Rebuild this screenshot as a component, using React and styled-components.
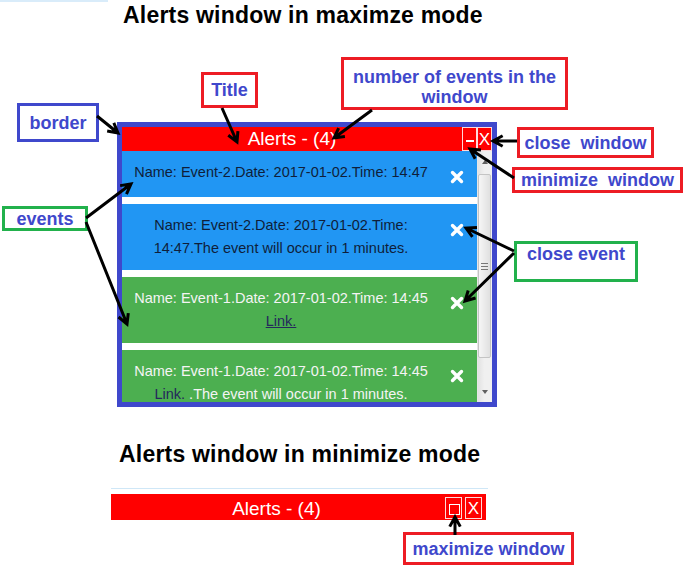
import React from "react";
import styled, { createGlobalStyle } from "styled-components";

const GlobalStyle = createGlobalStyle`
  body {
    margin: 0;
    background: #fff;
    font-family: "Liberation Sans", Arial, sans-serif;
  }
`;

const Page = styled.div`
  position: relative;
  width: 694px;
  height: 570px;
  overflow: hidden;
  background: #fff;
`;

const TopStrip = styled.div`
  width: 108px;
  height: 2px;
  background: #d9ecfa;
`;

const Heading = styled.h1`
  margin: ${(p) => p.$top}px 0 0;
  padding-left: ${(p) => p.$indent}px;
  font: bold 23px/26px "Liberation Sans", Arial, sans-serif;
  letter-spacing: 0.2px;
  color: #000;
`;

const Window = styled.div`
  margin: 94px 0 0 117px;
  width: 380px;
  height: 285px;
  box-sizing: border-box;
  border: 5px solid #3f48cc;
  display: flex;
  flex-direction: column;
  background: #fff;
`;

const TitleBar = styled.div`
  display: flex;
  align-items: flex-start;
  flex-shrink: 0;
  width: ${(p) => (p.$mini ? "375px" : "auto")};
  height: ${(p) => (p.$mini ? 26 : 24)}px;
  box-sizing: border-box;
  padding: ${(p) => (p.$mini ? "3px 4px 0 0" : "0")};
  gap: ${(p) => (p.$mini ? 3 : 0)}px;
  background: #ff0000;
`;

const Title = styled.div`
  flex: 1;
  text-align: center;
  color: #fff;
  font-size: 19px;
  line-height: 24px;
`;

const WinButton = styled.div`
  width: ${(p) => p.$w}px;
  height: ${(p) => p.$h}px;
  box-sizing: border-box;
  border: 1px solid rgba(255, 255, 255, 0.85);
  display: flex;
  align-items: center;
  justify-content: center;
  color: #fff;
  font-size: 17px;
  line-height: 1;
`;

const MinGlyph = styled.span`
  width: 8px;
  height: 1.5px;
  margin-top: 4px;
  background: #fff;
`;

const MaxGlyph = styled.span`
  width: 11px;
  height: 11px;
  margin: 3px 0 0 2px;
  box-sizing: border-box;
  border: 1.5px solid #fff;
`;

const Body = styled.div`
  display: flex;
  flex: 1;
  min-height: 0;
`;

const EventList = styled.div`
  flex: 1;
  overflow: hidden;
`;

const Event = styled.div`
  display: flex;
  align-items: flex-start;
  padding: 10px 7px 10px 10px;
  margin-bottom: 7px;
  background: ${(p) => p.$bg};
`;

const EventText = styled.div`
  flex: 1;
  margin-right: 14px;
  text-align: center;
  font-size: 14.5px;
  line-height: 23px;
  color: ${(p) => p.$fg};
`;

const EventLink = styled.a`
  color: #25285c;
  text-decoration: ${(p) => (p.$underline ? "underline" : "none")};
`;

const CloseEvent = styled.button`
  width: 26px;
  height: 26px;
  padding: 9px 0 0;
  border: 0;
  background: none;
  display: flex;
  justify-content: center;
  align-items: flex-start;
`;

const Scrollbar = styled.div`
  width: 15px;
  display: flex;
  flex-direction: column;
  box-sizing: border-box;
  border-left: 1px solid #e6e6e6;
  background: linear-gradient(to right, #e2e2e2, #f0f0f0 45%, #f0f0f0);
`;

const ScrollArrow = styled.div`
  height: 21px;
  display: flex;
  align-items: center;
  justify-content: center;
  &::after {
    content: "";
    border-left: 3.5px solid transparent;
    border-right: 3.5px solid transparent;
    ${(p) => (p.$up ? "border-bottom" : "border-top")}: 4px solid #606060;
  }
`;

const Track = styled.div`
  flex: 1;
  padding: 2px 1px 0 0;
`;

const Thumb = styled.div`
  height: 184px;
  box-sizing: border-box;
  border: 1px solid #c4c4c4;
  border-radius: 2px;
  background: linear-gradient(to right, #f6f6f6, #e0e0e0);
  display: flex;
  align-items: center;
  justify-content: center;
`;

const Grip = styled.span`
  width: 7px;
  height: 7px;
  background: repeating-linear-gradient(to bottom, #777 0 1px, transparent 1px 3px);
`;

const MiniWrap = styled.div`
  margin: 21px 0 0 111px;
  width: 377px;
  border-top: 1px solid #cfe7f7;
  padding-top: 5px;
`;

const Label = styled.div`
  position: absolute;
  left: ${(p) => p.$x}px;
  top: ${(p) => p.$y}px;
  width: ${(p) => p.$w}px;
  height: ${(p) => p.$h}px;
  box-sizing: border-box;
  border: 3px solid ${(p) => p.$color};
  padding-top: ${(p) => p.$pad || 0}px;
  background: #fff;
  display: flex;
  align-items: ${(p) => (p.$top ? "flex-start" : "center")};
  justify-content: center;
  text-align: center;
  white-space: pre-wrap;
  color: #3f48cc;
  font: bold 18px/20px "Liberation Sans", Arial, sans-serif;
`;

const Overlay = styled.svg`
  position: absolute;
  left: 0;
  top: 0;
  pointer-events: none;
`;

const RED = "#ed1c24";
const BLUE = "#3f48cc";
const GREEN = "#22b14c";

const labels = [
  { x: 201, y: 72, w: 57, h: 36, color: RED, text: "Title" },
  { x: 341, y: 57, w: 227, h: 53, color: RED, text: "number of events in the window", top: true, pad: 7 },
  { x: 17, y: 103, w: 82, h: 39, color: BLUE, text: "border" },
  { x: 2, y: 206, w: 86, h: 25, color: GREEN, text: "events" },
  { x: 517, y: 127, w: 137, h: 31, color: RED, text: "close  window" },
  { x: 512, y: 167, w: 171, h: 26, color: RED, text: "minimize  window" },
  { x: 514, y: 241, w: 124, h: 41, color: GREEN, text: "close event", top: true },
  { x: 403, y: 532, w: 171, h: 33, color: RED, text: "maximize window" },
];

const arrows = [
  [97, 116, 118, 133],
  [222, 108, 237, 142],
  [372, 110, 334, 138],
  [517, 141, 493, 141],
  [514, 178, 470, 149],
  [86, 218, 131, 184],
  [86, 222, 127, 324],
  [514, 251, 466, 228],
  [514, 253, 465, 301],
  [455, 535, 455, 517],
];

function Arrow({ x1, y1, x2, y2 }) {
  const a = Math.atan2(y2 - y1, x2 - x1);
  const len = 11;
  const s = 0.5;
  const h1 = [x2 - len * Math.cos(a - s), y2 - len * Math.sin(a - s)];
  const h2 = [x2 - len * Math.cos(a + s), y2 - len * Math.sin(a + s)];
  return (
    <path
      d={`M${x1} ${y1}L${x2} ${y2}M${h1[0]} ${h1[1]}L${x2} ${y2}L${h2[0]} ${h2[1]}`}
      stroke="#000"
      strokeWidth="3"
      fill="none"
    />
  );
}

const TimesIcon = () => (
  <svg width="14" height="14" viewBox="0 0 14 14">
    <path d="M2.5 2.5L11.5 11.5M11.5 2.5L2.5 11.5" stroke="#fff" strokeWidth="3.4" strokeLinecap="round" />
  </svg>
);

const BLUE_EVENT = "#2196f3";
const GREEN_EVENT = "#4caf50";

const events = [
  { id: 1, bg: BLUE_EVENT, fg: "#0f1e3a", text: "Name: Event-2.Date: 2017-01-02.Time: 14:47" },
  { id: 2, bg: BLUE_EVENT, fg: "#0f1e3a", text: "Name: Event-2.Date: 2017-01-02.Time: 14:47.The event will occur in 1 minutes." },
  { id: 3, bg: GREEN_EVENT, fg: "#f4f4f4", text: "Name: Event-1.Date: 2017-01-02.Time: 14:45 ", link: true, underline: true },
  { id: 4, bg: GREEN_EVENT, fg: "#f4f4f4", text: "Name: Event-1.Date: 2017-01-02.Time: 14:45 ", link: true, after: " .The event will occur in 1 minutes." },
];

const App = () => {
  return (
    <Page>
      <GlobalStyle />
      <TopStrip />
      <Heading $top={0} $indent={123}>Alerts window in maximze mode</Heading>

      <Window>
        <TitleBar>
          <Title>Alerts - (4)</Title>
          <WinButton $w={15} $h={24}><MinGlyph /></WinButton>
          <WinButton $w={15} $h={24}>X</WinButton>
        </TitleBar>
        <Body>
          <EventList>
            {events.map((ev) => (
              <Event key={ev.id} $bg={ev.bg}>
                <EventText $fg={ev.fg}>
                  {ev.text}
                  {ev.link && <EventLink $underline={ev.underline}>Link.</EventLink>}
                  {ev.after}
                </EventText>
                <CloseEvent><TimesIcon /></CloseEvent>
              </Event>
            ))}
          </EventList>
          <Scrollbar>
            <ScrollArrow $up />
            <Track>
              <Thumb><Grip /></Thumb>
            </Track>
            <ScrollArrow />
          </Scrollbar>
        </Body>
      </Window>

      <Heading $top={34} $indent={119}>Alerts window in minimize mode</Heading>

      <MiniWrap>
        <TitleBar $mini>
          <Title>Alerts - (4)</Title>
          <WinButton $w={17} $h={22}><MaxGlyph /></WinButton>
          <WinButton $w={17} $h={22}>X</WinButton>
        </TitleBar>
      </MiniWrap>

      {labels.map((l) => (
        <Label key={l.text} $x={l.x} $y={l.y} $w={l.w} $h={l.h} $color={l.color} $top={l.top} $pad={l.pad}>
          {l.text}
        </Label>
      ))}

      <Overlay width="694" height="570">
        {arrows.map(([x1, y1, x2, y2], i) => (
          <Arrow key={i} x1={x1} y1={y1} x2={x2} y2={y2} />
        ))}
      </Overlay>
    </Page>
  );
};

export default App;
